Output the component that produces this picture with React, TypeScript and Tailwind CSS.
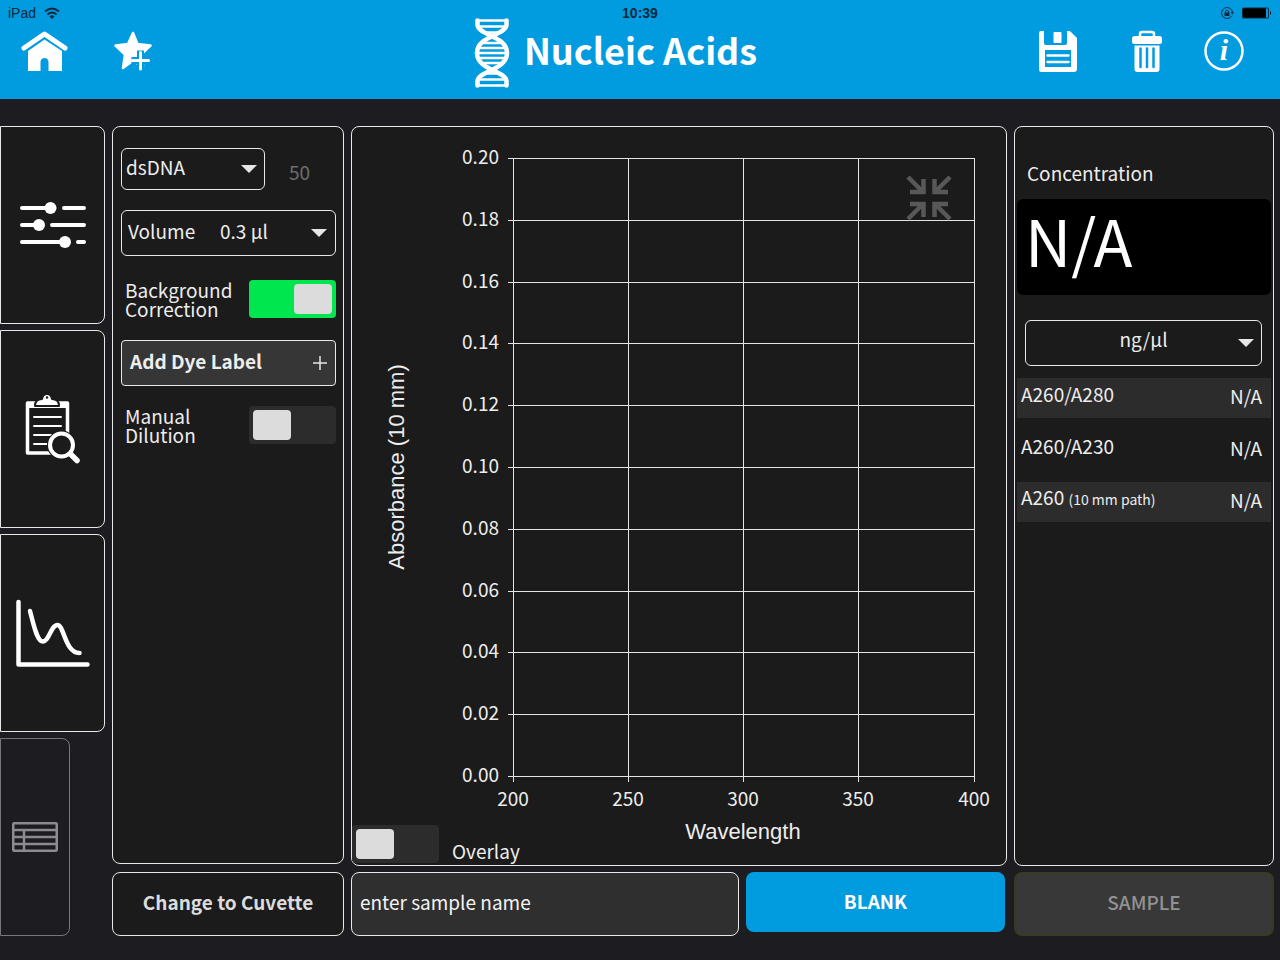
import type { ReactNode } from 'react';

const HomeIcon = () => (
  <svg viewBox="0 0 50 42" className="w-[50px] h-[42px]" fill="none">
    <path d="M4 18L24.500 4L45 18" stroke="white" strokeWidth="5" strokeLinecap="round" strokeLinejoin="round" />
    <path d="M8 21L24.500 9.500L42 21V41H28.500V32C28.500 26.500 20.500 26.500 20.500 32V41H8Z" fill="white" />
  </svg>
);

const StarPlusIcon = () => (
  <svg viewBox="0 0 42 42" className="w-[42px] h-[42px]" fill="none" strokeLinecap="round" strokeLinejoin="round">
    <path d="M21 3L25.500 14L38.500 15.500L29.500 24L31 36L20.500 31L11 38L13 24.500L3.500 15.500L16 14Z" fill="white" stroke="white" strokeWidth="2.500" />
    <path d="M28.500 20.500V42M19.500 30.500H38" stroke="#009cdf" strokeWidth="7" strokeLinecap="butt" />
    <path d="M28.500 22.500V39M20.500 30.500H36.500" stroke="white" strokeWidth="3" />
  </svg>
);

const DnaIcon = () => (
  <svg viewBox="0 0 36 70" className="w-9 h-[70px]" fill="none" stroke="white" strokeLinecap="round" strokeLinejoin="round">
    <path d="M3 2.500H33M5 8.500H31M11 14.500H25M10 25H26M5 30H31M4 35H32M5 40H31M10 45H26M11 55.500H25M5 61.500H31M3 67.500H33" strokeWidth="2.500" />
    <path d="M3.500 2.500V7C4 17 33 18 33 35S4 53 3.500 63V67.500" strokeWidth="4.500" />
    <path d="M32.500 2.500V7C32 17 3 18 3 35S32 53 32.500 63V67.500" strokeWidth="4.500" />
  </svg>
);

const SaveIcon = () => (
  <svg viewBox="0 0 40 42" className="w-10 h-[42px]">
    <path d="M3 1H6V13Q6 15 8 15H27Q29 15 29 13V1H32L39 8V39Q39 42 36 42H3Q1 42 1 39V3Q1 1 3 1Z" fill="white" />
    <rect x="15.500" y="2" width="8" height="11" rx="1" fill="white" />
    <path d="M7 20H33V37H7Z" fill="#009cdf" />
    <path d="M9.500 25.500H30.500M9.500 32H30.500" stroke="white" strokeWidth="2.500" strokeLinecap="round" />
  </svg>
);

const TrashIcon = () => (
  <svg viewBox="0 0 32 42" className="w-8 h-[42px]" fill="none">
    <path d="M9 7V4Q9 2 11 2H21Q23 2 23 4V7" stroke="white" strokeWidth="2.500" />
    <rect x="1" y="6" width="30" height="8" rx="2.500" fill="white" />
    <path d="M3.500 15.500H28.500V39Q28.500 42 25.500 42H6.500Q3.500 42 3.500 39Z" fill="white" />
    <path d="M9.500 18.500V37M16 18.500V37M22.500 18.500V37" stroke="#009cdf" strokeWidth="2.500" strokeLinecap="round" />
  </svg>
);

const InfoIcon = () => (
  <svg viewBox="0 0 42 42" className="w-[42px] h-[42px]">
    <circle cx="21" cy="21" r="18.500" fill="none" stroke="white" strokeWidth="2.500" />
    <text x="21" y="30" textAnchor="middle" fill="white" className="font-['Liberation_Serif',serif] text-[30px] font-bold italic">i</text>
  </svg>
);

const SlidersIcon = () => (
  <svg viewBox="0 0 70 50" className="w-[70px] h-[50px]" stroke="white" strokeWidth="4" strokeLinecap="round">
    <path d="M4 8H32M46 8H66M4 25H20M34 25H66M4 42H47M60 42H66" />
    <g fill="white" stroke="none">
      <circle cx="32.500" cy="8" r="6" />
      <circle cx="21" cy="25" r="6" />
      <circle cx="47" cy="42" r="6" />
    </g>
  </svg>
);

const ReportIcon = () => (
  <svg viewBox="0 0 58 74" className="w-[58px] h-[74px]" fill="none" strokeLinecap="round" strokeLinejoin="round">
    <path d="M3.500 11H43.500V61H3.500Z" stroke="white" strokeWidth="3.500" />
    <path d="M3 10H44V16H3Z" fill="white" />
    <path d="M11 14Q11 7 18 7Q19 2 23 2T28 7Q35 7 35 14Z" fill="white" stroke="#1b1b1b" strokeWidth="2" />
    <circle cx="23" cy="5.500" r="1.200" fill="#1b1b1b" />
    <path d="M10 25H37M10 34H37M10 43H28M10 52H23" stroke="white" strokeWidth="2" />
    <circle cx="37.500" cy="53" r="14.500" fill="#1b1b1b" />
    <circle cx="37.500" cy="53" r="11.500" stroke="white" strokeWidth="4" />
    <path d="M46.500 62L53 68.500" stroke="white" strokeWidth="5.500" />
  </svg>
);

const CurveIcon = () => (
  <svg viewBox="0 0 78 72" className="w-[78px] h-[72px]" fill="none" stroke="white" strokeWidth="4.500" strokeLinecap="round" strokeLinejoin="round">
    <path d="M4.500 5V67.500H73.500" />
    <path d="M16 14C20 29 23 44.500 29 44.500S37 28 43.500 28S51 56 65.500 56" />
  </svg>
);

const TableIcon = () => (
  <svg viewBox="0 0 46 30" className="w-[46px] h-[30px]" fill="none" stroke="#8c8c90" strokeWidth="2.500">
    <rect x="1.250" y="1.250" width="43.500" height="27.500" rx="1" />
    <path d="M1 8H45M1 15H45M1 22H45M12 8V29" />
  </svg>
);

const CollapseIcon = () => (
  <svg viewBox="0 0 46 46" className="w-[46px] h-[46px]" fill="none" stroke="#585858" strokeWidth="4.500">
    <path d="M2 2L17 17M4 17H17.500V4" />
    <path d="M44 2L29 17M42 17H28.500V4" />
    <path d="M2 44L17 29M4 29H17.500V42" />
    <path d="M44 44L29 29M42 29H28.500V42" />
  </svg>
);

const Caret = () => (
  <svg viewBox="0 0 16 8" className="absolute right-2 top-1/2 -translate-y-1/2 w-4 h-2 pointer-events-none" fill="#e6e6e6">
    <path d="M0 0H16L8 8Z" />
  </svg>
);

const TABS: { label: string; icon: ReactNode }[] = [
  { label: 'Settings', icon: <SlidersIcon /> },
  { label: 'Report', icon: <ReportIcon /> },
  { label: 'Graph', icon: <CurveIcon /> },
];

const RATIOS = [
  { name: 'A260/A280', note: '', value: 'N/A' },
  { name: 'A260/A230', note: '', value: 'N/A' },
  { name: 'A260', note: '(10 mm path)', value: 'N/A' },
];

const Y_LABELS = ['0.20', '0.18', '0.16', '0.14', '0.12', '0.10', '0.08', '0.06', '0.04', '0.02', '0.00'];
const X_LABELS = ['200', '250', '300', '350', '400'];

const PLOT = { left: 161, right: 622, top: 31, bottom: 649 };

function Toggle({ id, defaultChecked = false }: { id: string; defaultChecked?: boolean }) {
  return (
    <input
      id={id}
      type="checkbox"
      defaultChecked={defaultChecked}
      className="shrink-0 appearance-none flex items-center w-[87px] h-[38px] px-1 rounded bg-[#2c2c2c] checked:bg-[#00e64f] checked:justify-end before:block before:w-[38px] before:h-[30px] before:rounded-sm before:bg-[#dcdcdc]"
    />
  );
}

function StatusBar() {
  return (
    <div className="absolute inset-x-0 top-0 h-[26px] px-2 grid grid-cols-3 items-center font-['Liberation_Sans',sans-serif] text-sm text-[#0b2a3f]">
      <div className="flex items-center gap-2">
        <span>iPad</span>
        <svg viewBox="0 0 16 12" className="w-4 h-3" fill="none" stroke="currentColor" strokeWidth="2">
          <path d="M1 4.500Q8 -1.500 15 4.500M3.500 7.500Q8 3.500 12.500 7.500" />
          <path d="M5.500 9.500Q8 7 10.500 9.500L8 12Z" fill="currentColor" stroke="none" />
        </svg>
      </div>
      <span className="text-center font-bold">10:39</span>
      <div className="flex items-center justify-end gap-2">
        <svg viewBox="0 0 14 14" className="w-3.5 h-3.5" fill="none" stroke="currentColor">
          <path d="M12 9.500A5.500 5.500 0 1 1 12.500 6" />
          <path d="M10.500 6H14L12.300 8.500Z" fill="currentColor" stroke="none" />
          <rect x="4.500" y="6.500" width="5" height="3.500" fill="currentColor" stroke="none" />
          <path d="M5.500 6.500V5Q7 3 8.500 5V6.500" />
        </svg>
        <svg viewBox="0 0 30 12" className="w-[30px] h-3">
          <rect x="0" y="0.500" width="27" height="11" rx="1.500" fill="#0b2a3f" />
          <rect x="1" y="1.500" width="23" height="9" rx="1" fill="black" />
          <rect x="24" y="1.500" width="2" height="9" fill="#009cdf" />
          <path d="M28 4Q30 6 28 8Z" fill="black" />
        </svg>
      </div>
    </div>
  );
}

function Header() {
  return (
    <header className="relative h-[99px] pt-0.5 pl-5 pr-[35px] grid grid-cols-[1fr_auto_1fr] items-center bg-[#009cdf] text-white">
      <StatusBar />
      <div className="flex items-center gap-[42px]">
        <button type="button" aria-label="Home"><HomeIcon /></button>
        <button type="button" aria-label="Add to favourites"><StarPlusIcon /></button>
      </div>
      <div className="flex items-center gap-3.5 mr-[34px] pt-1">
        <DnaIcon />
        <h1 className="pb-2 text-[36px] leading-[48px] font-bold">Nucleic Acids</h1>
      </div>
      <div className="flex items-center justify-end">
        <button type="button" aria-label="Save" className="mr-[53px]"><SaveIcon /></button>
        <button type="button" aria-label="Delete" className="mr-10"><TrashIcon /></button>
        <button type="button" aria-label="Information"><InfoIcon /></button>
      </div>
    </header>
  );
}

function SideTabs() {
  return (
    <nav className="w-[105px] shrink-0 flex flex-col gap-1.5">
      {TABS.map((tab) => (
        <button
          key={tab.label}
          type="button"
          aria-label={tab.label}
          className="flex-1 flex items-center justify-center rounded-r-lg border border-[#e8e8e8] bg-[#1b1b1b]"
        >
          {tab.icon}
        </button>
      ))}
      <button
        type="button"
        aria-label="Table"
        className="flex-1 w-[70px] flex items-center justify-center rounded-r-lg border border-[#77777b]"
      >
        <TableIcon />
      </button>
    </nav>
  );
}

function SettingsPanel() {
  return (
    <section className="mb-0.5 pl-2 pr-[7px] pt-[21px] rounded-lg border border-[#e8e8e8] bg-[#1b1b1b]">
      <div className="flex items-center">
        <div className="relative w-36 shrink-0">
          <select aria-label="Sample type" defaultValue="dsDNA" className="appearance-none w-full h-[42px] px-1 pb-1 rounded-md border border-[#e8e8e8]">
            <option>dsDNA</option>
            <option>ssDNA</option>
            <option>RNA</option>
          </select>
          <Caret />
        </div>
        <input aria-label="Factor" defaultValue="50" disabled className="min-w-0 w-12 ml-6 pt-1.5 leading-6 text-[#6e6e6e]" />
      </div>
      <div className="relative mt-5 flex items-center h-[46px] rounded-md border border-[#e8e8e8]">
        <label htmlFor="volume" className="w-[92px] pl-1.5 pb-1">Volume</label>
        <select id="volume" defaultValue="0.3 µl" className="appearance-none flex-1 h-full px-1.5 pb-1">
          <option>0.3 µl</option>
          <option>1 µl</option>
          <option>2 µl</option>
        </select>
        <Caret />
      </div>
      <div className="mt-6 flex items-center justify-between pl-1">
        <label htmlFor="background" className="w-28 leading-[19px]">Background Correction</label>
        <Toggle id="background" defaultChecked />
      </div>
      <button type="button" className="mt-[22px] w-full h-[46px] px-2 flex items-center justify-between rounded border border-[#e8e8e8] bg-[#363636] font-bold">
        <span className="pb-1">Add Dye Label</span>
        <svg viewBox="0 0 14 14" className="w-3.5 h-3.5" stroke="#e6e6e6" strokeWidth="1.500">
          <path d="M7 0V14M0 7H14" />
        </svg>
      </button>
      <div className="mt-5 flex items-center justify-between pl-1">
        <label htmlFor="dilution" className="w-28 leading-[19px]">Manual Dilution</label>
        <Toggle id="dilution" />
      </div>
    </section>
  );
}

function SpectrumChart() {
  const dx = (PLOT.right - PLOT.left) / (X_LABELS.length - 1);
  const dy = (PLOT.bottom - PLOT.top) / (Y_LABELS.length - 1);

  return (
    <svg viewBox="0 0 654 738" className="block w-full h-auto text-[19px]" fill="#ededed" role="img" aria-label="Absorbance spectrum">
      {Y_LABELS.map((label, i) => {
        const y = Math.round(PLOT.top + i * dy);
        return (
          <g key={label}>
            <line x1={PLOT.left - 5} x2={PLOT.right + 1} y1={y + 0.5} y2={y + 0.5} stroke="#e4e4e4" />
            <text x={PLOT.left - 14} y={y + 6} textAnchor="end">{label}</text>
          </g>
        );
      })}
      {X_LABELS.map((label, i) => {
        const x = Math.floor(PLOT.left + i * dx);
        return (
          <g key={label}>
            <line x1={x + 0.5} x2={x + 0.5} y1={PLOT.top} y2={PLOT.bottom + 6} stroke="#e4e4e4" />
            <text x={x} y={PLOT.bottom + 30} textAnchor="middle">{label}</text>
          </g>
        );
      })}
      <g className="font-['Liberation_Sans',sans-serif] text-[22px]">
        <text x="391" y="712" textAnchor="middle">Wavelength</text>
        <text transform="translate(52 340) rotate(-90)" textAnchor="middle">Absorbance (10 mm)</text>
      </g>
    </svg>
  );
}

function GraphPanel() {
  return (
    <section className="relative rounded-lg border border-[#e8e8e8] bg-[#1b1b1b]">
      <SpectrumChart />
      <button type="button" aria-label="Collapse graph" className="absolute top-12 right-[54px]">
        <CollapseIcon />
      </button>
      <div className="absolute left-0 bottom-0.5 flex items-end gap-[13px]">
        <Toggle id="overlay" />
        <label htmlFor="overlay" className="leading-6">Overlay</label>
      </div>
    </section>
  );
}

function ResultsPanel() {
  return (
    <section className="px-0.5 pt-8 rounded-lg border border-[#e8e8e8] bg-[#1b1b1b]">
      <h2 className="px-2.5 leading-7">Concentration</h2>
      <output className="mt-3 block h-24 px-2 rounded-md bg-black text-white text-[64px] leading-[80px]">N/A</output>
      <div className="relative mt-[25px] ml-2 mr-[9px]">
        <select aria-label="Units" defaultValue="ng/µl" className="appearance-none w-full h-[46px] pb-2 text-center rounded-md border border-[#e8e8e8]">
          <option>ng/µl</option>
          <option>µg/µl</option>
        </select>
        <Caret />
      </div>
      <table className="w-full border-separate border-spacing-x-0 border-spacing-y-3">
        <tbody>
          {RATIOS.map((row) => (
            <tr key={row.name} className="h-10 odd:bg-[#2c2c2c]">
              <th scope="row" className="pl-1 pb-2 text-left font-normal leading-6">
                {row.name} {row.note && <span className="text-sm leading-6">{row.note}</span>}
              </th>
              <td className="pr-[9px] pb-1 text-right leading-6">{row.value}</td>
            </tr>
          ))}
        </tbody>
      </table>
    </section>
  );
}

export default function App() {
  return (
    <div className="min-h-screen flex flex-col bg-[#1c1c21] font-['Noto_Sans_CJK_SC',sans-serif] text-[19px] text-[#ededed]">
      <Header />
      <main className="flex-1 flex gap-[7px] pt-[27px] pb-6 pr-1.5">
        <SideTabs />
        <div className="flex-1 grid grid-cols-[232px_minmax(0,1fr)_260px] grid-rows-[1fr_64px] gap-x-[7px] gap-y-1.5">
          <SettingsPanel />
          <GraphPanel />
          <ResultsPanel />
          <button type="button" className="pb-1 rounded-lg border border-[#e8e8e8] bg-[#1b1b1b] font-bold text-[#dcdcdc]">
            Change to Cuvette
          </button>
          <div className="flex gap-[7px] pr-0.5">
            <input
              type="text"
              aria-label="Sample name"
              placeholder="enter sample name"
              className="flex-1 min-w-0 px-2 pb-1 rounded-lg border border-[#e8e8e8] bg-[#2f2f2f] placeholder:text-[#f4f4f4]"
            />
            <button type="button" className="w-[259px] h-[60px] pb-0.5 rounded-lg bg-[#009cdf] font-bold text-white">BLANK</button>
          </div>
          <button type="button" disabled className="pb-1 rounded-lg border-2 border-[#363b22] bg-[#383838] font-medium text-[#929292]">
            SAMPLE
          </button>
        </div>
      </main>
    </div>
  );
}
